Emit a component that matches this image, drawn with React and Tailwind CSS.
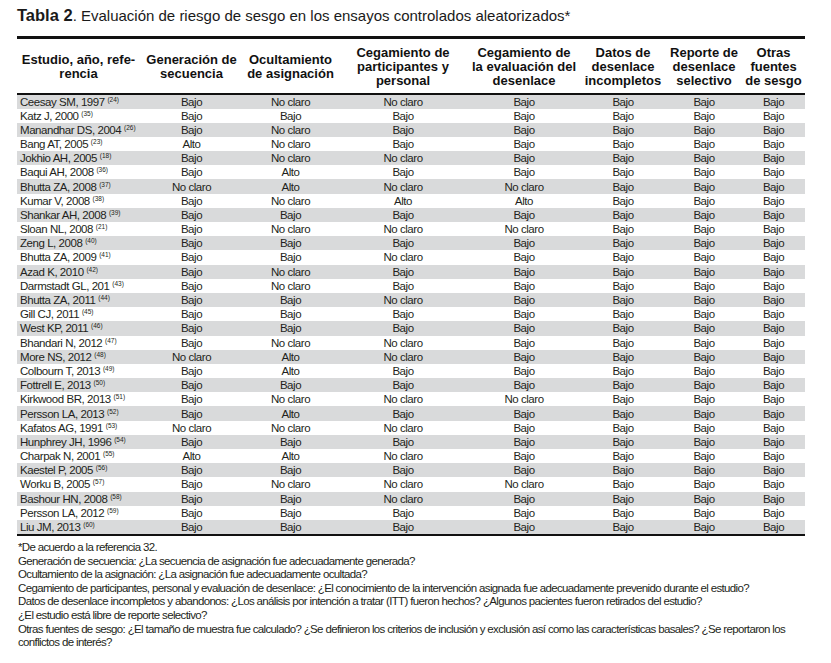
import React from "react";

// no narrow face installed: squeeze Liberation Sans with tracking
const narrow = "font-['Liberation_Sans',Arial,sans-serif] tracking-[-0.45px]";

const headers = [
  "Estudio, año, refe-\nrencia",
  "Generación de\nsecuencia",
  "Ocultamiento\nde asignación",
  "Cegamiento de\nparticipantes y\npersonal",
  "Cegamiento de\nla evaluación del\ndesenlace",
  "Datos de\ndesenlace\nincompletos",
  "Reporte de\ndesenlace\nselectivo",
  "Otras\nfuentes\nde sesgo",
];

const widths = ["w-[123px]", "w-[103px]", "w-[95px]", "w-[130px]", "w-[112px]", "w-[86px]", "w-[76px]", "w-[63px]"];

const B = "Bajo";
const N = "No claro";
const A = "Alto";

const rows = [
  ["Ceesay SM, 1997", "24", B, N, N, B, B, B, B],
  ["Katz J, 2000", "35", B, B, B, B, B, B, B],
  ["Manandhar DS, 2004", "26", B, N, B, B, B, B, B],
  ["Bang AT, 2005", "23", A, N, B, B, B, B, B],
  ["Jokhio AH, 2005", "18", B, N, N, B, B, B, B],
  ["Baqui AH, 2008", "36", B, A, B, B, B, B, B],
  ["Bhutta ZA, 2008", "37", N, A, N, N, B, B, B],
  ["Kumar V, 2008", "38", B, N, A, A, B, B, B],
  ["Shankar AH, 2008", "39", B, B, B, B, B, B, B],
  ["Sloan NL, 2008", "21", B, N, N, N, B, B, B],
  ["Zeng L, 2008", "40", B, B, B, B, B, B, B],
  ["Bhutta ZA, 2009", "41", B, B, N, B, B, B, B],
  ["Azad K, 2010", "42", B, N, B, B, B, B, B],
  ["Darmstadt GL, 201", "43", B, N, B, B, B, B, B],
  ["Bhutta ZA, 2011", "44", B, B, N, B, B, B, B],
  ["Gill CJ, 2011", "45", B, B, B, B, B, B, B],
  ["West KP, 2011", "46", B, B, B, B, B, B, B],
  ["Bhandari N, 2012", "47", B, N, N, B, B, B, B],
  ["More NS, 2012", "48", N, A, N, B, B, B, B],
  ["Colbourn T, 2013", "49", B, A, B, B, B, B, B],
  ["Fottrell E, 2013", "50", B, B, B, B, B, B, B],
  ["Kirkwood BR, 2013", "51", B, N, N, N, B, B, B],
  ["Persson LA, 2013", "52", B, A, B, B, B, B, B],
  ["Kafatos AG, 1991", "53", N, N, N, B, B, B, B],
  ["Hunphrey JH, 1996", "54", B, B, B, B, B, B, B],
  ["Charpak N, 2001", "55", A, A, N, B, B, B, B],
  ["Kaestel P, 2005", "56", B, B, B, B, B, B, B],
  ["Worku B, 2005", "57", B, N, N, N, B, B, B],
  ["Bashour HN, 2008", "58", B, B, N, B, B, B, B],
  ["Persson LA, 2012", "59", B, B, B, B, B, B, B],
  ["Liu JM, 2013", "60", B, B, B, B, B, B, B],
];

const notes = [
  "*De acuerdo a la referencia 32.",
  "Generación de secuencia: ¿La secuencia de asignación fue adecuadamente generada?",
  "Ocultamiento de la asignación: ¿La asignación fue adecuadamente ocultada?",
  "Cegamiento de participantes, personal y evaluación de desenlace: ¿El conocimiento de la intervención asignada fue adecuadamente prevenido durante el estudio?",
  "Datos de desenlace incompletos y abandonos: ¿Los análisis por intención a tratar (ITT) fueron hechos? ¿Algunos pacientes fueron retirados del estudio?",
  "¿El estudio está libre de reporte selectivo?",
  "Otras fuentes de sesgo: ¿El tamaño de muestra fue calculado? ¿Se definieron los criterios de inclusión y exclusión así como las características basales? ¿Se reportaron los conflictos de interés?",
];

export default function App() {
  return (
    <div className="w-[831px] h-[663px] bg-white pl-[17px] pt-[6px] text-[#231f20]">

      {/* TITLE */}
      <p className="font-['Liberation_Sans',Arial,sans-serif] text-[15px] leading-[19px] text-[#1a1a1a]">
        <span className="font-bold text-[16.5px]">Tabla 2</span>. Evaluación de riesgo de sesgo en los ensayos controlados aleatorizados*
      </p>

      {/* TABLE */}
      <table className="mt-[11px] w-[788px] table-fixed border-collapse border-t-[3px] border-b-[2.5px] border-[#111]">
        <colgroup>
          {widths.map((w, i) => (
            <col key={i} className={w} />
          ))}
        </colgroup>
        <thead>
          <tr className="border-b-[2.5px] border-[#111]">
            {headers.map((h, i) => (
              <th
                key={i}
                className="h-[56px] align-middle pt-[2px] px-0 font-['Liberation_Sans',Arial,sans-serif] font-bold text-[13px] leading-[14px] text-center whitespace-pre-line text-[#111]"
              >
                {h}
              </th>
            ))}
          </tr>
        </thead>
        <tbody className={narrow}>
          {rows.map((r, i) => (
            <tr key={i} className={i % 2 === 0 ? "bg-[#d9dadb]" : "bg-white"}>
              <td className="h-[14.2px] p-0 pl-[3px] text-[11.5px] leading-[14px] whitespace-nowrap">
                {r[0]}{" "}
                <span className="text-[6.5px] tracking-normal align-top leading-[10px]">({r[1]})</span>
              </td>
              {r.slice(2).map((v, j) => (
                <td key={j} className="h-[14.2px] p-0 text-center text-[11.5px] leading-[14px]">
                  {v}
                </td>
              ))}
            </tr>
          ))}
        </tbody>
      </table>

      {/* FOOTNOTES */}
      <div className="mt-[5px] pl-[1px] w-[790px] text-[11.5px] leading-[13.6px] font-['Liberation_Sans',Arial,sans-serif] tracking-[-0.65px]">
        {notes.map((n, i) => (
          <p key={i}>{n}</p>
        ))}
      </div>

    </div>
  );
}
